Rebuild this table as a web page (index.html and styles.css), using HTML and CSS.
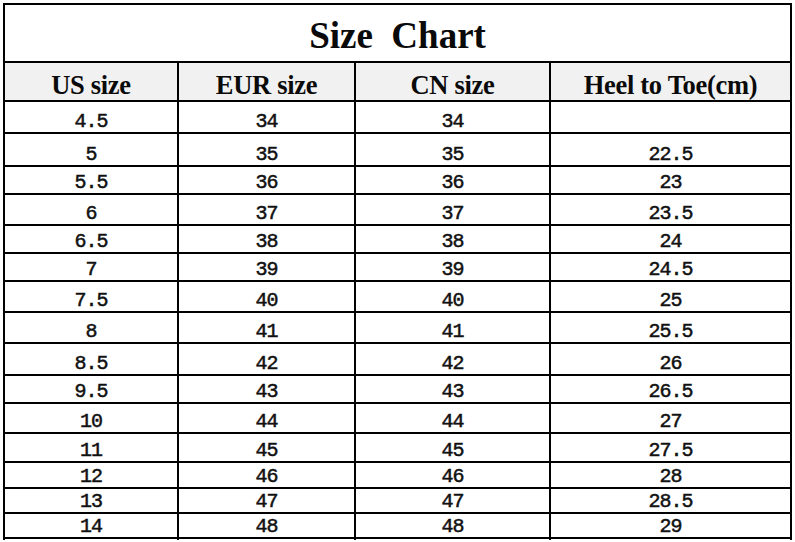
FILE: index.html
```html
<!DOCTYPE html>
<html>
<head>
<meta charset="utf-8">
<link rel="stylesheet" href="styles.css">
</head>
<body>
<div class="chart">
  <div class="title">Size&nbsp; Chart</div>
  <div class="head">US size</div>
  <div class="head">EUR size</div>
  <div class="head">CN size</div>
  <div class="head">Heel to Toe(cm)</div>

  <div class="cell">4.5</div><div class="cell">34</div><div class="cell">34</div><div class="cell"></div>
  <div class="cell">5</div><div class="cell">35</div><div class="cell">35</div><div class="cell">22.5</div>
  <div class="cell">5.5</div><div class="cell">36</div><div class="cell">36</div><div class="cell">23</div>
  <div class="cell">6</div><div class="cell">37</div><div class="cell">37</div><div class="cell">23.5</div>
  <div class="cell">6.5</div><div class="cell">38</div><div class="cell">38</div><div class="cell">24</div>
  <div class="cell">7</div><div class="cell">39</div><div class="cell">39</div><div class="cell">24.5</div>
  <div class="cell">7.5</div><div class="cell">40</div><div class="cell">40</div><div class="cell">25</div>
  <div class="cell">8</div><div class="cell">41</div><div class="cell">41</div><div class="cell">25.5</div>
  <div class="cell">8.5</div><div class="cell">42</div><div class="cell">42</div><div class="cell">26</div>
  <div class="cell">9.5</div><div class="cell">43</div><div class="cell">43</div><div class="cell">26.5</div>
  <div class="cell">10</div><div class="cell">44</div><div class="cell">44</div><div class="cell">27</div>
  <div class="cell">11</div><div class="cell">45</div><div class="cell">45</div><div class="cell">27.5</div>
  <div class="cell">12</div><div class="cell">46</div><div class="cell">46</div><div class="cell">28</div>
  <div class="cell">13</div><div class="cell">47</div><div class="cell">47</div><div class="cell">28.5</div>
  <div class="cell">14</div><div class="cell">48</div><div class="cell">48</div><div class="cell">29</div>
  <div class="cell"></div><div class="cell"></div><div class="cell"></div><div class="cell"></div>
</div>
</body>
</html>
```

FILE: styles.css
```css
html, body {
  margin: 0;
  padding: 0;
  background: #fff;
  overflow: hidden;
}

body {
  padding: 3px 0 0 3px;
}

.chart {
  display: grid;
  grid-template-columns: 172px 175px 193px 239px;
  grid-template-rows: 56px 37px 30px 31px 26px 29px 26px 26px 29px 29px 30px 26px 28px 27px 24px 23px 23px 1px;
  gap: 2px;
  padding: 2px 2px 0 2px;
  background: #000;
  width: max-content;
}

.title {
  grid-column: 1 / -1;
  background: #fff;
  display: flex;
  justify-content: center;
  align-items: center;
  padding-top: 5px;
  font-family: "Liberation Serif", "Times New Roman", serif;
  font-weight: bold;
  font-size: 37px;
  color: #0a0a0a;
}

.head {
  background: #f1f1f1;
  display: flex;
  justify-content: center;
  align-items: center;
  padding-top: 8px;
  font-family: "Liberation Serif", "Times New Roman", serif;
  font-weight: bold;
  font-size: 26.5px;
  letter-spacing: -0.3px;
  color: #0a0a0a;
}

.cell {
  background: #fff;
  display: flex;
  justify-content: center;
  align-items: flex-end;
  font-family: "Liberation Mono", "Courier New", monospace;
  font-weight: normal;
  font-size: 20px;
  line-height: 21px;
  letter-spacing: -1px;
  -webkit-text-stroke: 0.5px #111;
  color: #111;
}
```
